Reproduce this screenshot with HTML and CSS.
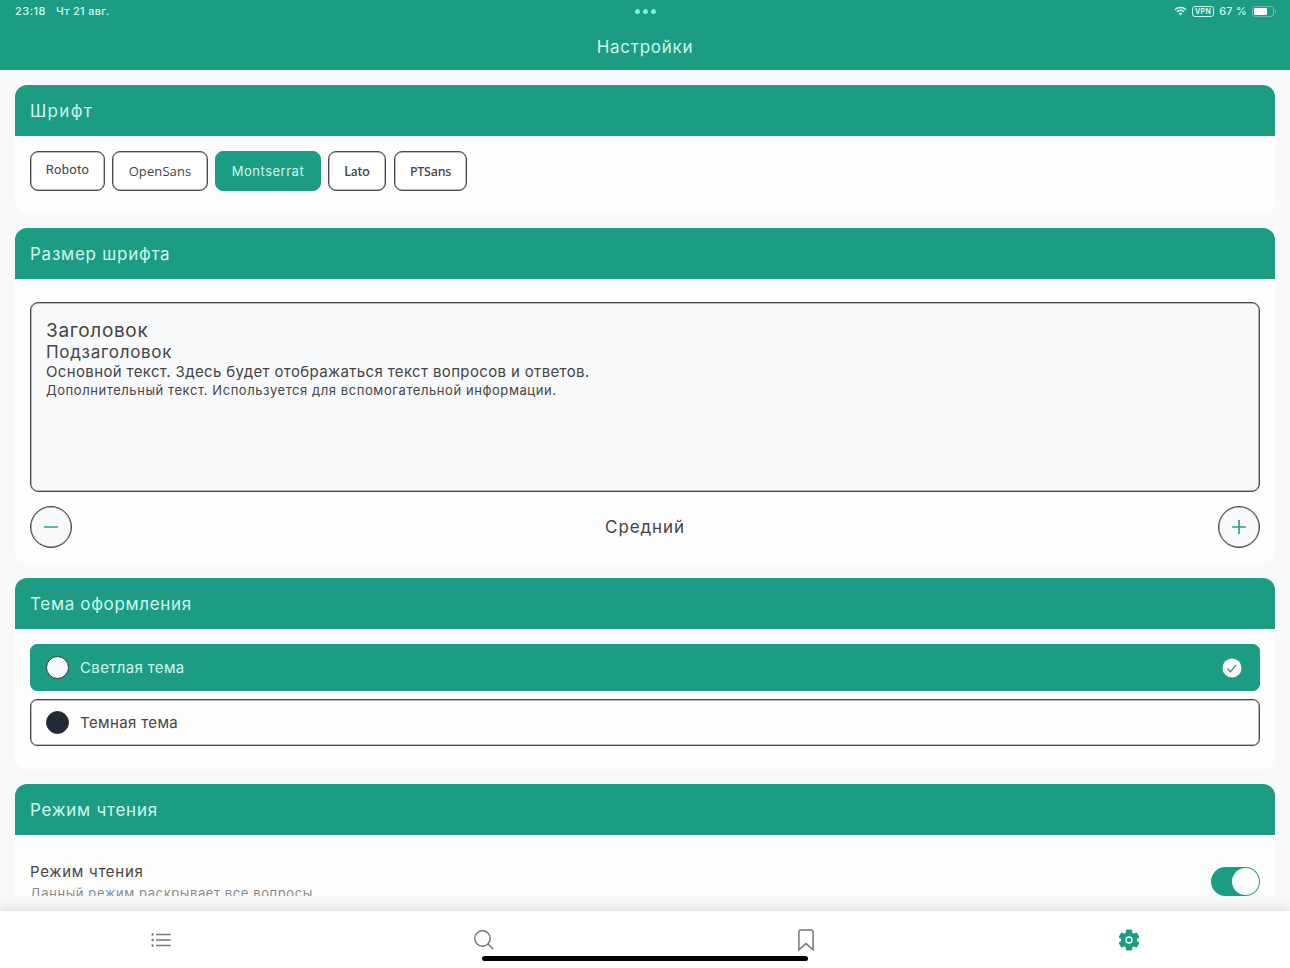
FILE: index.html
```
<!DOCTYPE html>
<html lang="ru">
<head>
    <meta charset="UTF-8">
    <meta name="viewport" content="width=device-width, initial-scale=1.0">
    <title>Настройки</title>
    <link rel="stylesheet" href="styles.css">
</head>
<body>
    <header class="header">
        <div class="status-bar">
            <div class="status-left"><span class="time">23:18</span><span class="date">Чт 21 авг.</span></div>
            <div class="dots"><i></i><i></i><i></i></div>
            <div class="status-right">
                <svg class="wifi" viewBox="0 0 14 10">
                    <path d="M1 3.6a8.6 8.6 0 0 1 12 0M3.2 5.9a5.4 5.4 0 0 1 7.6 0"/>
                    <path class="wifi-dot" d="M7 9.8 4.9 7.7a3 3 0 0 1 4.2 0z"/>
                </svg>
                <span class="vpn">VPN</span>
                <span class="percent">67 %</span>
                <span class="battery"><i></i></span>
            </div>
        </div>
        <h1 class="title">Настройки</h1>
    </header>

    <main class="content">
        <!-- Font -->
        <section class="card">
            <h2 class="card-title t-font">Шрифт</h2>
            <div class="card-body fonts">
                <button class="chip roboto">Roboto</button>
                <button class="chip opensans">OpenSans</button>
                <button class="chip montserrat active">Montserrat</button>
                <button class="chip lato">Lato</button>
                <button class="chip ptsans">PTSans</button>
            </div>
        </section>

        <!-- Font size -->
        <section class="card">
            <h2 class="card-title">Размер шрифта</h2>
            <div class="card-body sizes">
                <div class="preview">
                    <p class="p-title">Заголовок</p>
                    <p class="p-subtitle">Подзаголовок</p>
                    <p class="p-main">Основной текст. Здесь будет отображаться текст вопросов и ответов.</p>
                    <p class="p-extra">Дополнительный текст. Используется для вспомогательной информации.</p>
                </div>
                <div class="stepper">
                    <button class="round"><svg viewBox="0 0 16 16"><path d="M1 8h14"/></svg></button>
                    <span class="size-name">Средний</span>
                    <button class="round"><svg viewBox="0 0 16 16"><path d="M1 8h14M8 1v14"/></svg></button>
                </div>
            </div>
        </section>

        <!-- Theme -->
        <section class="card">
            <h2 class="card-title t-theme">Тема оформления</h2>
            <div class="card-body themes">
                <div class="theme selected">
                    <span class="swatch light"></span>
                    <span class="theme-name">Светлая тема</span>
                    <svg class="check" viewBox="0 0 20 20"><circle cx="10" cy="10" r="9.5"/><path d="m5.4 10.5 3 3.300 5.800-7"/></svg>
                </div>
                <div class="theme">
                    <span class="swatch dark"></span>
                    <span class="theme-name">Темная тема</span>
                </div>
            </div>
        </section>

        <!-- Reading mode -->
        <section class="card">
            <h2 class="card-title">Режим чтения</h2>
            <div class="card-body reading">
                <div class="reading-text">
                    <p class="r-name">Режим чтения</p>
                    <p class="r-hint">Данный режим раскрывает все вопросы</p>
                </div>
                <div class="toggle"><i></i></div>
            </div>
        </section>
    </main>

    <nav class="tabs">
        <a class="tab">
            <svg class="i-list" viewBox="0 0 20 14"><path d="M5 1.5h14.5M5 7h14.5M5 12.5h14.5"/><path class="bullets" d="M1.6 1.5h.01M1.6 7h.01M1.6 12.5h.01"/></svg>
        </a>
        <a class="tab">
            <svg class="i-search" viewBox="0 0 20 20"><circle cx="8.5" cy="8.5" r="7.7"/><path d="m14 14 5.3 5.3"/></svg>
        </a>
        <a class="tab">
            <svg class="i-mark" viewBox="0 0 16 22"><path d="M.9 20.7V2.9Q.9 1 2.8 1h10.4q1.9 0 1.9 1.9v17.8L8 14.6z"/></svg>
        </a>
        <a class="tab">
            <svg class="i-gear" viewBox="0 0 22 22">
                <rect x="7.9" y=".5" width="6.2" height="21" rx="1.2"/>
                <rect x="7.9" y=".5" width="6.2" height="21" rx="1.2" transform="rotate(60 11 11)"/>
                <rect x="7.9" y=".5" width="6.2" height="21" rx="1.2" transform="rotate(120 11 11)"/>
                <circle class="gear-body" cx="11" cy="11" r="8"/>
                <circle class="gear-hole" cx="11" cy="11" r="3"/>
            </svg>
        </a>
        <div class="home-bar"></div>
    </nav>
</body>
</html>
```
FILE: styles.css
```
* {
    margin: 0;
    padding: 0;
    box-sizing: border-box;
}

body {
    height: 100vh;
    overflow: hidden;
    display: flex;
    flex-direction: column;
    background: #f8f9fb;
    color: #444;
    font-family: Inter, 'Open Sans', sans-serif;
}

/* Header */
.header {
    height: 70px;
    flex: none;
    background: #1d9c84;
    color: #cdf8ec;
}

.status-bar {
    height: 22px;
    padding: 0 15px;
    display: grid;
    grid-template-columns: 1fr auto 1fr;
    align-items: center;
    font-size: 11px;
    font-weight: 500;
}

.status-left {
    display: flex;
    gap: 10px;
}

.time {
    letter-spacing: 0.5px;
}

.date {
    letter-spacing: 0.3px;
}

.dots {
    display: flex;
    gap: 3px;
}

.dots i {
    width: 5px;
    height: 5px;
    border-radius: 50%;
    background: #7df0d5;
}

.status-right {
    display: flex;
    justify-content: flex-end;
    align-items: center;
    gap: 5px;
}

.wifi {
    width: 13px;
    height: 10px;
    fill: none;
    stroke: #d5fff5;
    stroke-width: 1.7;
}

.wifi .wifi-dot {
    fill: #d5fff5;
    stroke: none;
}

.vpn {
    width: 22px;
    height: 11px;
    border: 1px solid #c5f7e9;
    border-radius: 3px;
    font-size: 7px;
    font-weight: 700;
    line-height: 9px;
    text-align: center;
    letter-spacing: 0.4px;
}

.percent {
    letter-spacing: 0.2px;
}

.battery {
    position: relative;
    width: 22px;
    height: 11px;
    padding: 1px;
    margin-right: 1px;
    border: 1px solid #65bfad;
    border-radius: 3px;
}

.battery i {
    display: block;
    width: 13px;
    height: 7px;
    border-radius: 1px;
    background: #fff;
}

.battery::after {
    content: '';
    position: absolute;
    top: 3px;
    right: -3px;
    width: 1px;
    height: 3px;
    background: #65bfad;
}

.title {
    text-align: center;
    font-size: 17px;
    font-weight: 400;
    line-height: 50px;
    letter-spacing: 0.75px;
}

/* Cards */
.content {
    height: 826px;
    flex: none;
    padding: 15px 15px 0;
    display: flex;
    flex-direction: column;
    gap: 15px;
    overflow: hidden;
}

.card {
    flex: none;
    background: #fefefe;
    border-radius: 12px;
    overflow: hidden;
}

.card-title {
    height: 51px;
    padding-left: 15px;
    background: #1d9c84;
    color: #cdf8ec;
    font-size: 17px;
    font-weight: 400;
    line-height: 52px;
    letter-spacing: 0.75px;
}

.t-font {
    letter-spacing: 1.3px;
}

.t-theme {
    letter-spacing: 0.67px;
}

.card-body {
    padding: 15px;
}

/* Font chips */
.fonts {
    height: 77px;
    display: flex;
    gap: 7px;
}

.chip {
    height: 40px;
    border: 1px solid #4a4a4a;
    border-radius: 8px;
    background: #fff;
    box-shadow: inset 0 0 0 0.5px #777;
    color: #444;
    font-size: 13px;
    font-weight: 500;
}

.roboto {
    width: 75px;
    padding-bottom: 3px;
    font-family: Roboto, sans-serif;
    font-weight: 400;
    letter-spacing: 0.3px;
}

.opensans {
    width: 96px;
    font-family: 'Open Sans', sans-serif;
    letter-spacing: 0.1px;
}

.montserrat {
    width: 106px;
    padding-bottom: 1px;
    font-family: Inter, sans-serif;
    font-weight: 400;
    letter-spacing: 0.5px;
}

.lato {
    width: 58px;
    margin-right: 1px;
    padding-bottom: 1px;
    font-family: Lato, sans-serif;
    font-weight: 600;
}

.ptsans {
    width: 73px;
    font-family: 'Noto Sans', sans-serif;
    font-size: 12.5px;
    letter-spacing: -0.25px;
}

.chip.active {
    background: #1d9c84;
    border-color: #1d9c84;
    box-shadow: none;
    color: #cdf8ec;
}

/* Font size */
.sizes {
    height: 284px;
    padding-top: 23px;
}

.preview {
    height: 190px;
    padding: 17px 15px;
    border: 1px solid #4a4a4a;
    border-radius: 8px;
    background: #f8f9fb;
    box-shadow: inset 0 0 0 0.5px #777;
}

.p-title {
    font-size: 19px;
    line-height: 22px;
    letter-spacing: 0.65px;
}

.p-subtitle {
    font-size: 17px;
    line-height: 21px;
    letter-spacing: 0.7px;
}

.p-main {
    font-size: 15px;
    line-height: 18px;
    letter-spacing: 0.36px;
}

.p-extra {
    font-size: 13px;
    line-height: 18px;
    letter-spacing: 0.57px;
}

.stepper {
    display: flex;
    justify-content: space-between;
    align-items: center;
    margin-top: 14px;
}

.round {
    width: 42px;
    height: 42px;
    display: flex;
    align-items: center;
    justify-content: center;
    border: 1px solid #444;
    border-radius: 50%;
    background: #f8f9fb;
    box-shadow: inset 0 0 0 0.5px #777;
}

.round svg {
    width: 16px;
    height: 16px;
    fill: none;
    stroke: #2f9e88;
    stroke-width: 1.7;
}

.size-name {
    font-size: 17px;
    letter-spacing: 0.9px;
}

/* Themes */
.themes {
    height: 140px;
    display: flex;
    flex-direction: column;
    gap: 8px;
}

.theme {
    height: 47px;
    padding: 0 17px 0 15px;
    display: flex;
    align-items: center;
    border: 1px solid #4a4a4a;
    border-radius: 7px;
    box-shadow: inset 0 0 0 0.5px #777;
}

.theme.selected {
    background: #1d9c84;
    border-color: #1d9c84;
    box-shadow: none;
    color: #cdf8ec;
}

.swatch {
    width: 23px;
    height: 23px;
    margin-right: 11px;
    border: 1px solid #333;
    border-radius: 50%;
}

.swatch.light {
    background: #f9fafb;
}

.swatch.dark {
    background: #1f2937;
}

.theme-name {
    font-size: 15px;
    letter-spacing: 0.37px;
}

.check {
    width: 20px;
    height: 20px;
    margin-left: auto;
    fill: none;
    stroke: #1d9c84;
    stroke-width: 1.3;
}

.check circle {
    fill: #fff;
    stroke: none;
}

/* Reading mode */
.reading {
    height: 90px;
    padding-top: 26px;
    display: flex;
    justify-content: space-between;
}

.r-name {
    font-size: 15px;
    line-height: 21px;
    letter-spacing: 0.72px;
}

.r-hint {
    margin-top: 1px;
    color: #888;
    font-size: 13px;
    line-height: 20px;
    letter-spacing: 0.59px;
}

.toggle {
    width: 49px;
    height: 29px;
    margin-top: 6px;
    padding: 1px;
    border-radius: 15px;
    background: #1d9c84;
}

.toggle i {
    display: block;
    width: 27px;
    height: 27px;
    margin-left: auto;
    border-radius: 50%;
    background: #fff;
}

/* Bottom tabs */
.tabs {
    position: relative;
    height: 57px;
    flex: none;
    margin-top: 15px;
    display: grid;
    grid-template-columns: repeat(4, 1fr);
    background: #fff;
    box-shadow: 0 0 14px rgba(0, 0, 0, 0.17);
    clip-path: inset(-15px 0 0 0);
}

.tab {
    display: flex;
    align-items: center;
    justify-content: center;
}

.tab svg {
    fill: none;
    stroke: #777;
    stroke-width: 1.5;
}

.i-list {
    width: 20px;
    height: 14px;
}

.i-list .bullets {
    stroke-width: 2.4;
    stroke-linecap: round;
}

.i-search {
    width: 20px;
    height: 20px;
}

.i-mark {
    width: 16px;
    height: 22px;
}

.tab .i-gear {
    width: 22px;
    height: 22px;
    fill: #1d9c84;
    stroke: none;
}

.i-gear .gear-hole {
    stroke: #e8fff8;
    stroke-width: 1.4;
}

.home-bar {
    position: absolute;
    left: 50%;
    bottom: 7px;
    width: 326px;
    height: 5px;
    border-radius: 3px;
    background: #000;
    transform: translateX(-50%);
}
```
